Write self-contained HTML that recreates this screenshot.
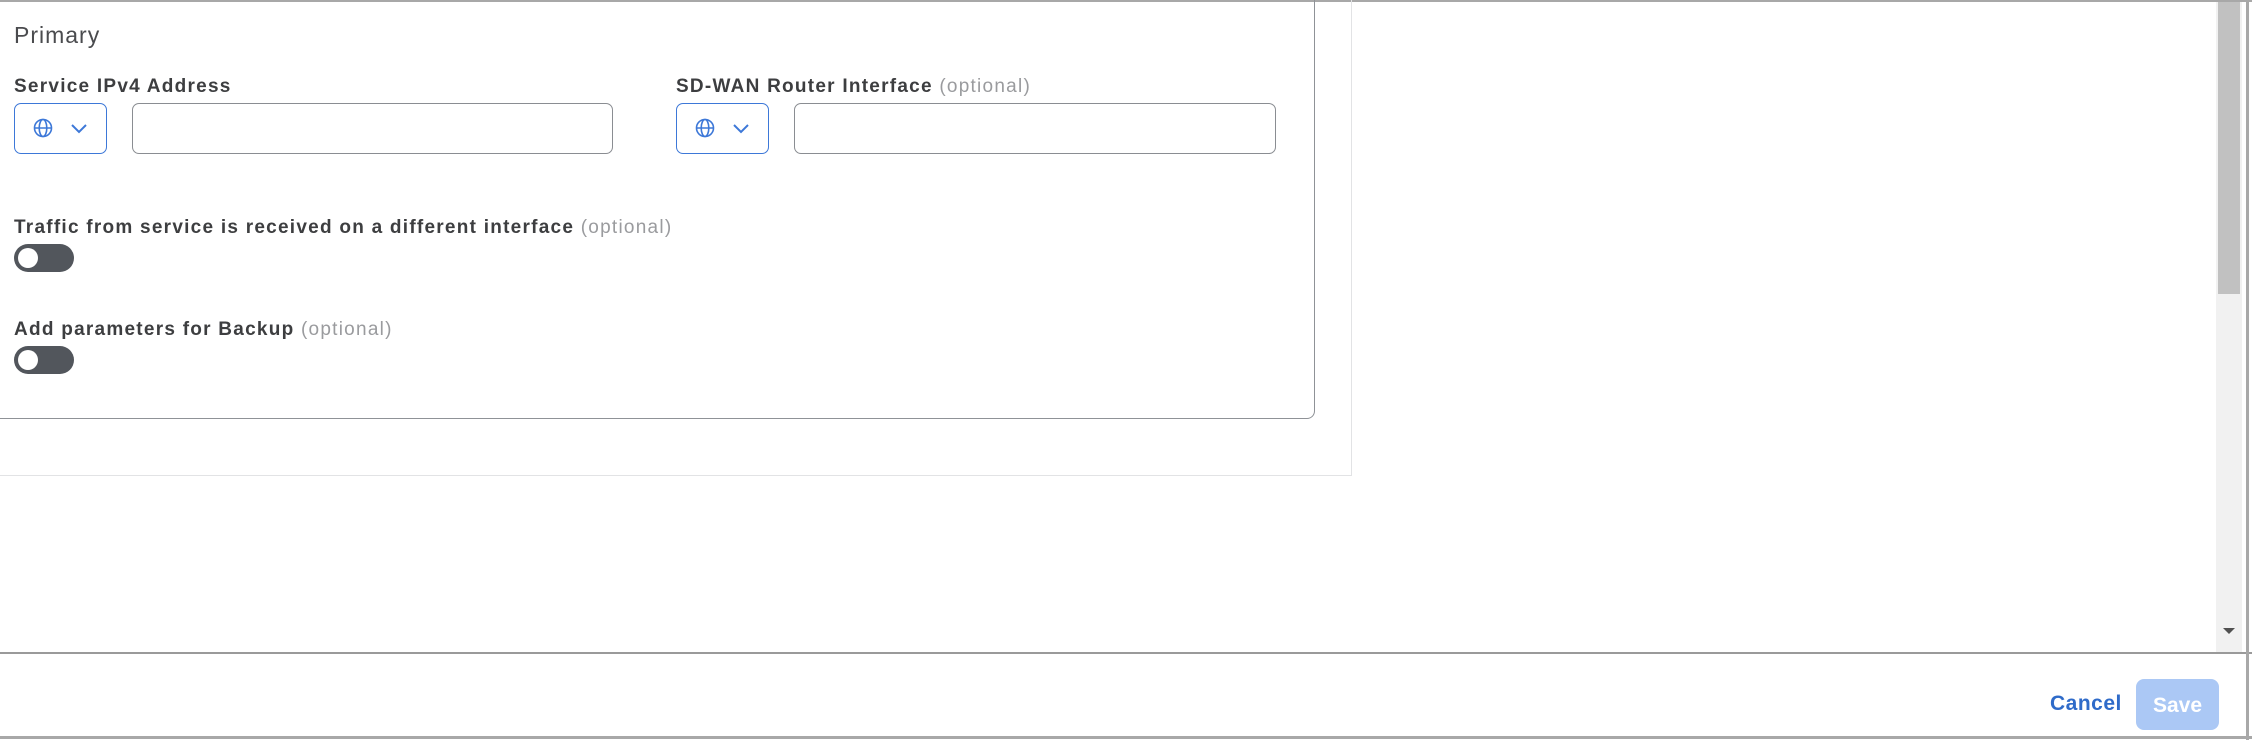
<!DOCTYPE html>
<html><head><meta charset="utf-8"><style>
*{box-sizing:border-box;margin:0;padding:0}
body{width:2252px;height:740px;overflow:hidden;background:#fff;font-family:"Liberation Sans",sans-serif;position:relative;color:#3a3b3d}
.abs{position:absolute}
.lbl{font-size:19px;font-weight:bold;color:#3d3e40;white-space:nowrap;letter-spacing:1.25px}
.opt{font-weight:normal;color:#9a9b9e}
.sel{border:1.5px solid #3d78d8;border-radius:7px;height:51px;width:93px;background:#fff}
.inp{border:1.5px solid #8a8d92;border-radius:7px;height:51px;background:#fff}
.tog{width:60px;height:28px;border-radius:14px;background:#52565c}
.tog::after{content:"";position:absolute;left:4px;top:4px;width:20px;height:20px;border-radius:50%;background:#fff}
</style></head><body>
<div class="abs" style="left:0;top:0;width:2252px;height:2px;background:#a8a8a8"></div>
<div class="abs" style="left:-10px;top:0;width:1362px;height:476px;border:1.5px solid #e2e3e5;border-top:none"></div>
<div class="abs" style="left:-10px;top:0;width:1325px;height:419px;border:1.5px solid #8f9297;border-top:none;border-radius:0 0 8px 0"></div>
<div class="abs" style="left:14px;top:22px;font-size:23px;color:#4a4b4e;letter-spacing:1px">Primary</div>
<div class="abs lbl" style="left:14px;top:76px">Service IPv4 Address</div>
<div class="abs lbl" style="left:676px;top:76px">SD-WAN Router Interface <span class="opt">(optional)</span></div>
<div class="abs sel" style="left:14px;top:103px"></div>
<div class="abs inp" style="left:132px;top:103px;width:481px"></div>
<div class="abs sel" style="left:676px;top:103px"></div>
<div class="abs inp" style="left:794px;top:103px;width:482px"></div>
<svg class="abs" style="left:32px;top:117px" width="22" height="22" viewBox="0 0 22 22" fill="none" stroke="#3d78d8" stroke-width="1.6"><circle cx="11" cy="11" r="8.5"/><ellipse cx="11" cy="11" rx="3.8" ry="8.5"/><path d="M2.5 11h17"/></svg>
<svg class="abs" style="left:70px;top:121px" width="18" height="14" viewBox="0 0 18 14" fill="none" stroke="#3d78d8" stroke-width="2"><path d="M2 4l7 7 7-7"/></svg>
<svg class="abs" style="left:694px;top:117px" width="22" height="22" viewBox="0 0 22 22" fill="none" stroke="#3d78d8" stroke-width="1.6"><circle cx="11" cy="11" r="8.5"/><ellipse cx="11" cy="11" rx="3.8" ry="8.5"/><path d="M2.5 11h17"/></svg>
<svg class="abs" style="left:732px;top:121px" width="18" height="14" viewBox="0 0 18 14" fill="none" stroke="#3d78d8" stroke-width="2"><path d="M2 4l7 7 7-7"/></svg>
<div class="abs lbl" style="left:14px;top:217px">Traffic from service is received on a different interface <span class="opt">(optional)</span></div>
<div class="abs tog" style="left:14px;top:244px"></div>
<div class="abs lbl" style="left:14px;top:319px">Add parameters for Backup <span class="opt">(optional)</span></div>
<div class="abs tog" style="left:14px;top:346px"></div>
<div class="abs" style="left:2216px;top:2px;width:26px;height:650px;background:#f1f1f1"></div>
<div class="abs" style="left:2218px;top:2px;width:22px;height:292px;background:#c1c1c1"></div>
<div class="abs" style="left:2223px;top:628px;width:0;height:0;border-left:6px solid transparent;border-right:6px solid transparent;border-top:6px solid #505050"></div>
<div class="abs" style="left:0;top:652px;width:2252px;height:2px;background:#9a9a9a"></div>
<div class="abs" style="left:2246px;top:0;width:3px;height:740px;background:#a8a8a8"></div>
<div class="abs" style="left:0;top:736px;width:2252px;height:3px;background:#a8a8a8"></div>
<div class="abs" style="left:2050px;top:692px;font-size:21px;font-weight:bold;color:#2f6bc9;letter-spacing:0.5px">Cancel</div>
<div class="abs" style="left:2136px;top:679px;width:83px;height:51px;border-radius:8px;background:#abc8f5;color:#fff;font-size:21px;font-weight:bold;text-align:center;line-height:53px">Save</div>
</body></html>
